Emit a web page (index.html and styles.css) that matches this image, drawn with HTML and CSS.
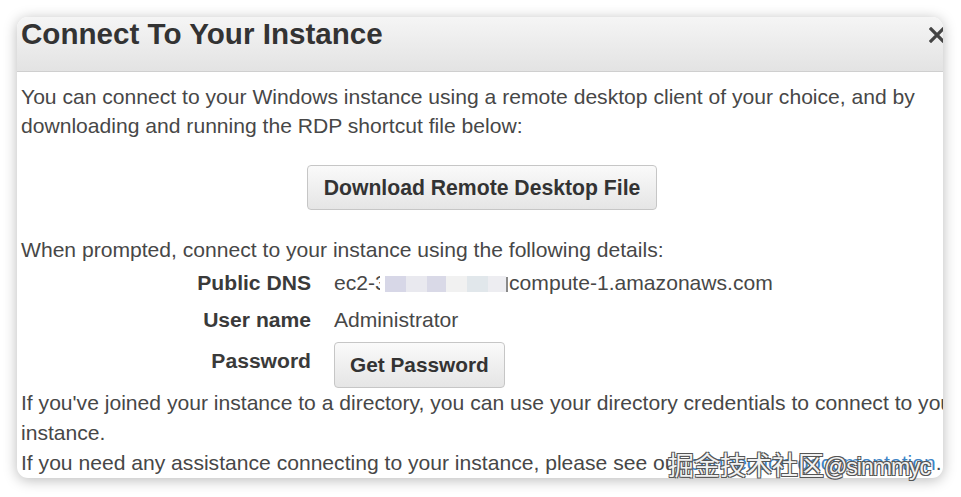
FILE: index.html
```html
<!DOCTYPE html>
<html lang="en">
<head>
<meta charset="utf-8">
<title>Connect To Your Instance</title>
<link rel="stylesheet" href="styles.css">
</head>
<body>
<div class="page">
  <div class="dialog">
    <div class="inner">
      <div class="header">
        <h1 class="title">Connect To Your Instance</h1>
        <span class="close" aria-label="Close">
          <svg width="16" height="16" viewBox="0 0 16 16"><path d="M2 2 L14 14 M14 2 L2 14" stroke="#444" stroke-width="3.2" stroke-linecap="square" fill="none"/></svg>
        </span>
      </div>
      <div class="content">
        <p class="intro">You can connect to your Windows instance using a remote desktop client of your choice, and by downloading and running the RDP shortcut file below:</p>
        <div class="actions"><button class="btn btn-large">Download Remote Desktop File</button></div>
        <p class="prompt">When prompted, connect to your instance using the following details:</p>
        <div class="details">
          <div class="label">Public DNS</div>
          <div class="value">ec2-<span class="cut">3</span><span class="redact r1"></span><span class="redact r2"></span><span class="redact r3"></span><span class="redact r4"></span><span class="redact r5"></span><span class="redact r6"></span><span class="redact-mark"></span>compute-1.amazonaws.com</div>
          <div class="label">User name</div>
          <div class="value">Administrator</div>
          <div class="label label-pw">Password</div>
          <div class="value"><button class="btn btn-small">Get Password</button></div>
        </div>
        <p class="note">If you've joined your instance to a directory, you can use your directory credentials to connect to your instance.</p>
        <p class="note">If you need any assistance connecting to your instance, please see our <a class="link" href="#">connection documentation</a>.</p>
      </div>
    </div>
  </div>
  <div class="watermark">掘金技术社区<span class="wm-latin">@sinmmyc</span></div>
</div>
</body>
</html>
```

FILE: styles.css
```css
html, body {
  margin: 0;
  padding: 0;
  background: #ffffff;
}

.page {
  position: relative;
  padding: 17px;
  font-family: "Liberation Sans", Arial, sans-serif;
}

.dialog {
  width: 926px;
  height: 461px;
  border-radius: 11px;
  overflow: hidden;
  background: #ffffff;
  box-shadow: 0 2px 14px rgba(0, 0, 0, 0.28);
}

.inner {
  width: 960px;
}

.header {
  height: 55px;
  box-sizing: border-box;
  border-bottom: 1px solid #cfcfcf;
  background: linear-gradient(#f5f5f5, #e3e3e3);
  display: flex;
  justify-content: space-between;
  align-items: flex-start;
  padding: 0 0 0 4px;
}

.title {
  margin: 0;
  font-size: 29.6px;
  line-height: 33px;
  font-weight: bold;
  color: #333333;
}

.close {
  margin-top: 10px;
  margin-right: 32px;
  width: 16px;
  height: 16px;
  display: block;
}

.close svg {
  display: block;
}

.content {
  padding: 0 4px;
  color: #474747;
  font-size: 21.1px;
}

.content p {
  margin: 0;
}

.intro {
  margin-top: 10px !important;
  line-height: 29px;
}

.actions {
  width: 922px;
  margin-top: 25px;
  text-align: center;
}

.btn {
  font-family: "Liberation Sans", Arial, sans-serif;
  font-weight: bold;
  font-size: 21.2px;
  color: #333333;
  background: linear-gradient(#fafafa, #e5e5e5);
  border: 1px solid #c6c6c6;
  border-radius: 4px;
  padding: 0 16px;
  box-sizing: border-box;
  cursor: pointer;
}

.btn-large {
  height: 45px;
}

.btn-small {
  height: 46px;
  font-size: 20.8px;
  padding: 0 15px;
}

.prompt {
  margin-top: 25px !important;
  line-height: 29px;
}

.details {
  margin-top: 4px;
  display: grid;
  grid-template-columns: 290px auto;
  column-gap: 23px;
  row-gap: 8px;
  line-height: 29px;
}

.label {
  text-align: right;
  font-weight: bold;
  color: #3a3a3a;
}

.label-pw {
  padding-top: 4px;
}

.value {
  white-space: nowrap;
}

.cut {
  display: inline-block;
  width: 5px;
  overflow: hidden;
  vertical-align: top;
}

.redact {
  display: inline-block;
  height: 16px;
  vertical-align: -2px;
}

.r1 { width: 21px; background: #d7d7e7; margin-left: 5px; }
.r2 { width: 21px; background: #e9e9ef; }
.r3 { width: 19px; background: #d9d9e7; }
.r4 { width: 21px; background: #f1f1f1; }
.r5 { width: 21px; background: #e1e7eb; }
.r6 { width: 18px; background: #ededf1; }

.redact-mark {
  display: inline-block;
  width: 2px;
  height: 15px;
  background: #8a8a8a;
  vertical-align: -2px;
  margin-right: 1px;
}

.note {
  line-height: 30px;
  white-space: normal;
}

.link {
  color: #3d84c6;
  text-decoration: none;
}

.watermark {
  position: absolute;
  left: 668px;
  top: 448px;
  font-family: "Noto Sans CJK SC", "Liberation Sans", sans-serif;
  font-size: 26px;
  line-height: 32px;
  color: #f2f2f2;
  white-space: nowrap;
  text-shadow: -1px -1px 0 #555, 1px -1px 0 #555, -1px 1px 0 #555, 1px 1px 0 #555;
}

.wm-latin {
  font-family: "Liberation Sans", sans-serif;
  font-size: 23px;
  letter-spacing: -1px;
}
```
